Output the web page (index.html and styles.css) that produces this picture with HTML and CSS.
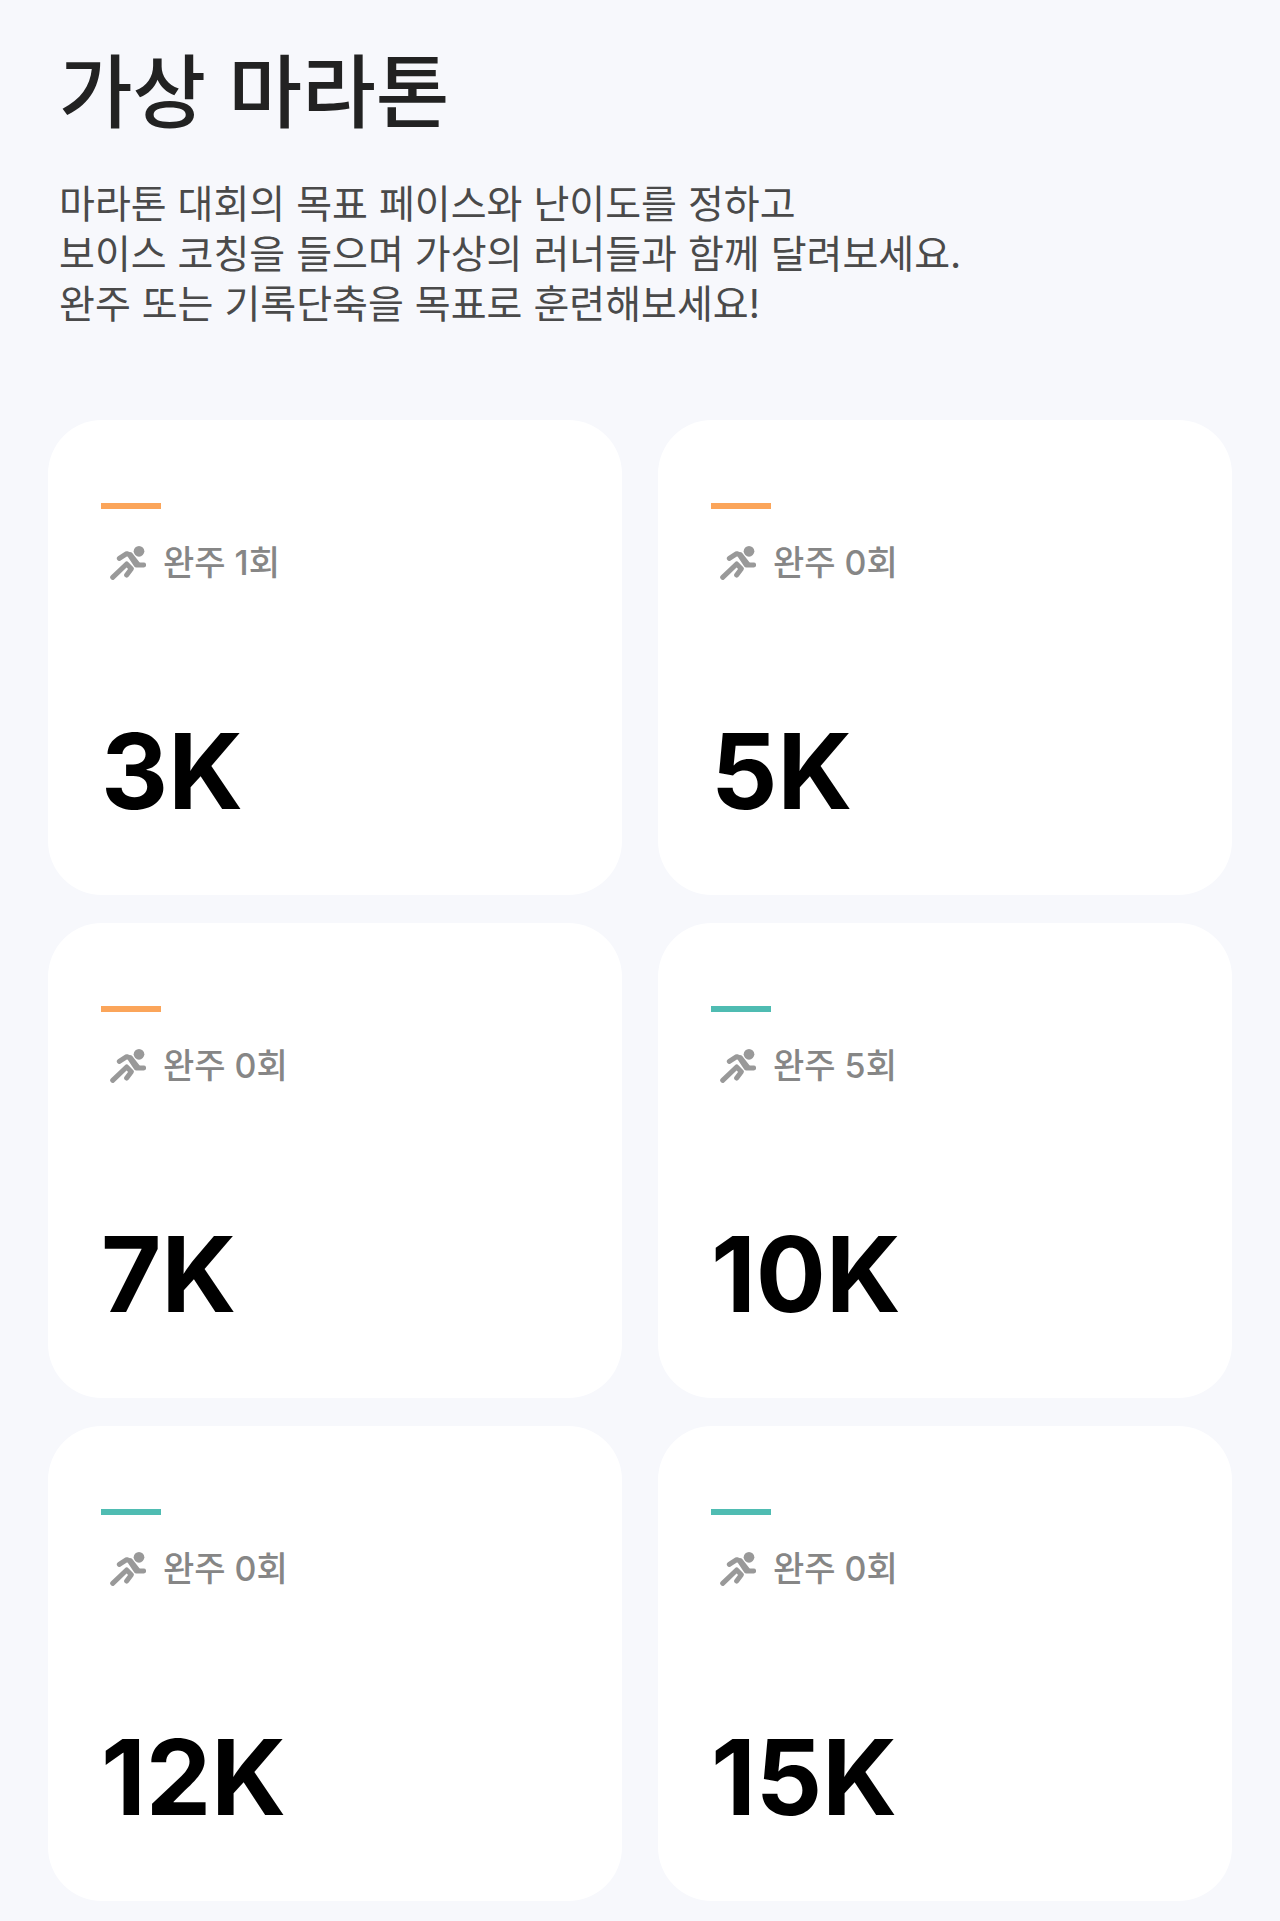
FILE: index.html
```html
<!DOCTYPE html>
<html lang="ko">
<head>
    <meta charset="UTF-8">
    <meta name="viewport" content="width=device-width, initial-scale=1.0">
    <title>가상 마라톤</title>
    <link rel="stylesheet" href="styles.css">
</head>
<body>
    <!-- Runner icon shared by all cards -->
    <svg class="icon-defs" aria-hidden="true">
        <symbol id="runner" viewBox="0 0 108 102">
            <circle cx="87" cy="16" r="16" fill="currentColor"/>
            <g fill="none" stroke="currentColor" stroke-width="15" stroke-linecap="round" stroke-linejoin="round">
                <path d="M28 37 L50 23 L58 26 L79 57 L101 57"/>
                <path d="M62 27 L83 54"/>
                <path d="M8 94 L50 54 L64 68 L50 87"/>
            </g>
        </symbol>
    </svg>

    <header class="page-header">
        <h1>가상 마라톤</h1>
        <p>
            마라톤 대회의 목표 페이스와 난이도를 정하고<br>
            보이스 코칭을 들으며 가상의 러너들과 함께 달려보세요.<br>
            완주 또는 기록단축을 목표로 훈련해보세요!
        </p>
    </header>

    <!-- Distance cards -->
    <main class="card-grid">
        <a href="#3k" class="card orange">
            <span class="bar"></span>
            <span class="finish"><svg class="icon"><use href="#runner"/></svg>완주 1회</span>
            <strong class="distance">3K</strong>
        </a>
        <a href="#5k" class="card orange">
            <span class="bar"></span>
            <span class="finish"><svg class="icon"><use href="#runner"/></svg>완주 0회</span>
            <strong class="distance">5K</strong>
        </a>
        <a href="#7k" class="card orange">
            <span class="bar"></span>
            <span class="finish"><svg class="icon"><use href="#runner"/></svg>완주 0회</span>
            <strong class="distance">7K</strong>
        </a>
        <a href="#10k" class="card teal">
            <span class="bar"></span>
            <span class="finish"><svg class="icon"><use href="#runner"/></svg>완주 5회</span>
            <strong class="distance">10K</strong>
        </a>
        <a href="#12k" class="card teal">
            <span class="bar"></span>
            <span class="finish"><svg class="icon"><use href="#runner"/></svg>완주 0회</span>
            <strong class="distance">12K</strong>
        </a>
        <a href="#15k" class="card teal">
            <span class="bar"></span>
            <span class="finish"><svg class="icon"><use href="#runner"/></svg>완주 0회</span>
            <strong class="distance">15K</strong>
        </a>
    </main>
</body>
</html>
```

FILE: styles.css
```css
* {
    box-sizing: border-box;
}

body {
    font-family: 'Inter', 'Noto Sans CJK KR', sans-serif;
    background: #f7f8fc;
    color: #222;
    margin: 0;
    padding: 36px 48px 20px;
}

.icon-defs {
    display: none;
}

.page-header {
    padding: 0 11px;
}

.page-header h1 {
    font-family: 'Noto Sans CJK KR', sans-serif;
    font-size: 80px;
    font-weight: 500;
    line-height: 100px;
    margin: 0 0 43px;
}

.page-header p {
    font-size: 39px;
    line-height: 50px;
    color: #4a4a4a;
    margin: 0 0 91px;
}

.card-grid {
    display: grid;
    grid-template-columns: 1fr 1fr;
    gap: 28px 36px;
}

.card {
    display: flex;
    flex-direction: column;
    align-items: flex-start;
    background: #fff;
    border-radius: 54px;
    padding: 83px 53px 60px;
    color: #000;
    text-decoration: none;
}

.bar {
    width: 60px;
    height: 6px;
}

.orange .bar {
    background: #fba55a;
}

.teal .bar {
    background: #4fbcb2;
}

.finish {
    display: flex;
    align-items: center;
    gap: 17px;
    margin-top: 29px;
    padding-left: 9px;
    font-size: 34px;
    font-weight: 500;
    line-height: 50px;
    color: #868686;
}

.icon {
    width: 36px;
    height: 34px;
    color: #999;
}

.distance {
    margin-top: 119px;
    font-size: 104px;
    font-weight: 700;
    line-height: 128px;
}
```
